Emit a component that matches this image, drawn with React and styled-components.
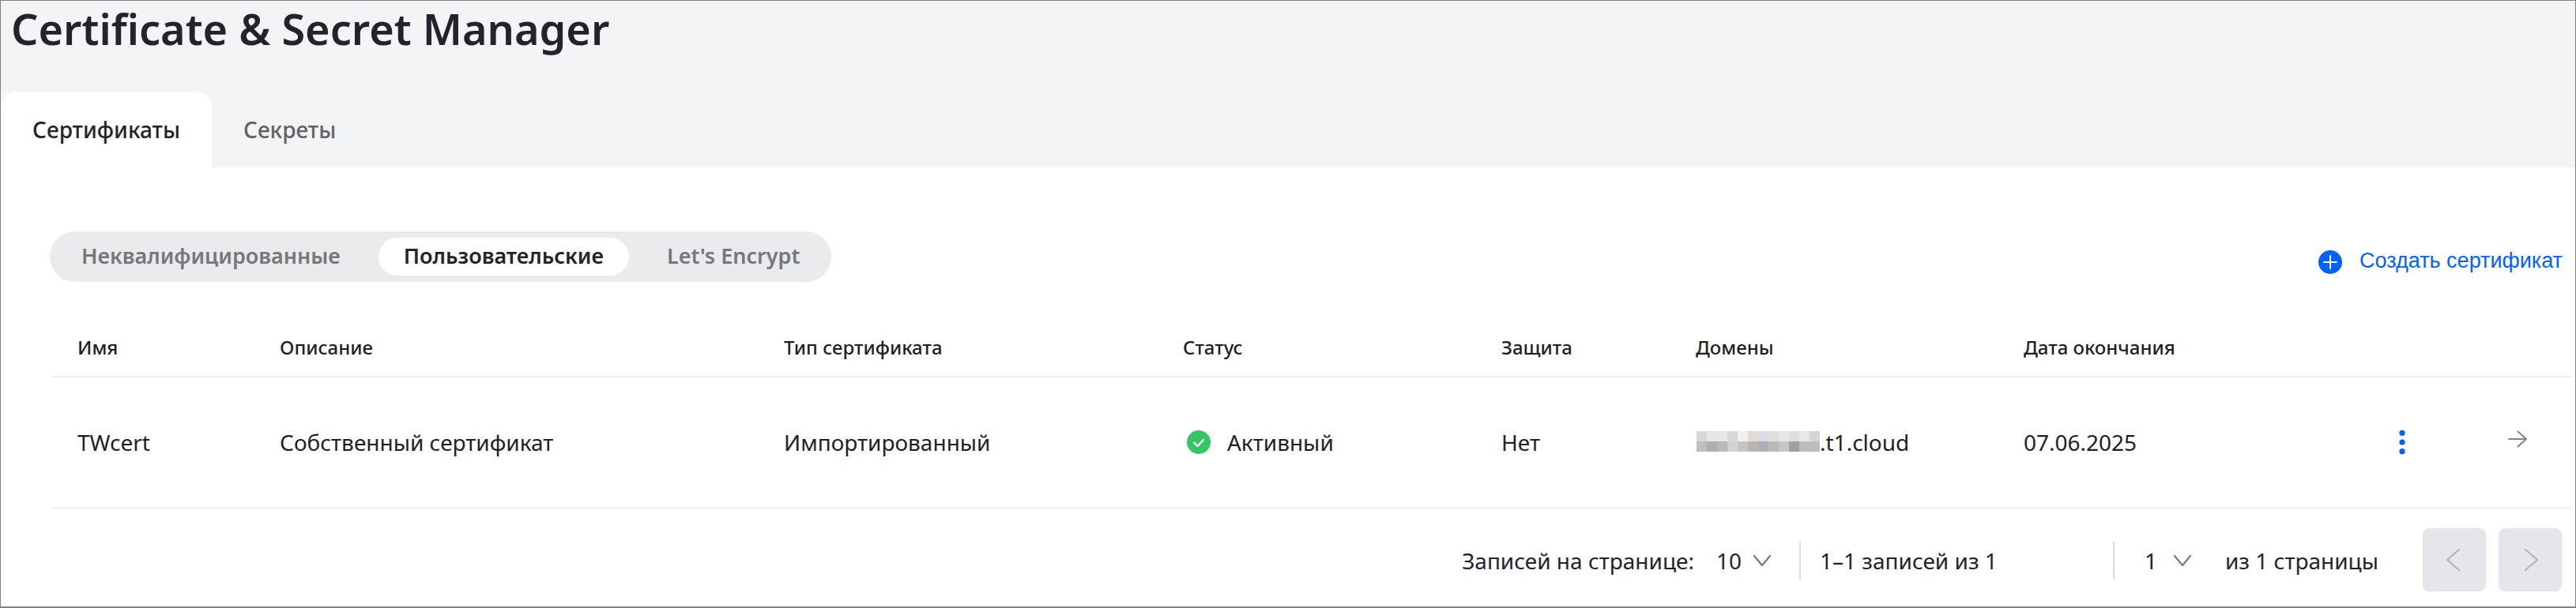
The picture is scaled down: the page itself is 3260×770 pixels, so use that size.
import React from "react";
import styled, { createGlobalStyle } from "styled-components";

const GlobalStyle = createGlobalStyle`
  *, *::before, *::after { box-sizing: border-box; }
  body { margin: 0; background: #fff; }
  button, select { font: inherit; color: inherit; border: 0; padding: 0; background: none; }
`;

const Page = styled.div`
  min-height: 100vh;
  border: 1px solid #808085;
  border-bottom-width: 2px;
  background: #fff;
  color: #23242b;
  font: 400 28px/40px "Noto Sans", sans-serif;
`;

const Header = styled.header`
  background: #f3f4f6;
`;

const Title = styled.h1`
  margin: 0;
  padding: 0 13px;
  font-size: 54px;
  line-height: 70px;
  font-weight: 600;
`;

const Tabs = styled.nav`
  display: flex;
  margin-top: 45px;
`;

const Tab = styled.button`
  height: 96px;
  padding: 0 40px;
  border-radius: 20px 20px 0 0;
  font-size: 28px;
  font-weight: 500;
  color: ${(p) => (p.$active ? "#23242b" : "#606265")};
  background: ${(p) => (p.$active ? "#fff" : "transparent")};
`;

const Main = styled.main`
  padding: 81px 4px 18px 62px;
`;

const Toolbar = styled.div`
  display: flex;
  justify-content: space-between;
  align-items: center;
  padding-right: 12px;
`;

const Segments = styled.div`
  display: flex;
  gap: 16px;
  padding: 8px;
  border-radius: 32px;
  background: #e9ebed;
`;

const Segment = styled.button`
  height: 48px;
  padding: 0 32px;
  border-radius: 24px;
  line-height: 38px;
  padding-bottom: 2px;
  font-weight: 600;
  font-size: 27px;
  color: ${(p) => (p.$active ? "#23242b" : "#75777d")};
  background: ${(p) => (p.$active ? "#fff" : "transparent")};
`;

const CreateLink = styled.a`
  display: flex;
  align-items: center;
  gap: 22px;
  padding-top: 14px;
  color: #0062ff;
  font: 400 27px/40px "Liberation Sans", Arial, sans-serif;
  text-decoration: none;
`;

const CreateLabel = styled.span`
  padding-bottom: 4px;
`;

const Table = styled.table`
  width: calc(100% - 2px);
  margin: 48px 0 0 2px;
  table-layout: fixed;
  border-collapse: separate;
  border-spacing: 0;
  color: #1f1f22;
`;

const HeadCell = styled.th`
  width: ${(p) => (p.$width ? p.$width + "px" : "auto")};
  height: 73px;
  padding: 0 0 2px 33px;
  text-align: left;
  font-size: 24px;
  font-weight: 500;
  white-space: nowrap;
  border-bottom: 2px solid #efeff0;
`;

const Cell = styled.td`
  height: 166px;
  padding: 0 0 0 33px;
  white-space: nowrap;
  border-bottom: 2px solid #efeff0;
`;

const Inline = styled.div`
  display: flex;
  align-items: center;
  gap: ${(p) => p.$gap || 0}px;
  padding-left: ${(p) => p.$indent || 0}px;
`;

const Mosaic = styled.span`
  display: grid;
  grid-template-columns: repeat(12, 13px);
  grid-auto-rows: 13px;
  margin: 0 0 2px 1px;
`;

const Pixel = styled.i`
  background: ${(p) => p.$color};
`;

const IconButton = styled.button`
  display: flex;
  align-items: center;
  justify-content: center;
  width: 40px;
  height: 40px;
  cursor: pointer;
`;

const OpenButton = styled(IconButton)`
  padding-bottom: 8px;
`;

const Footer = styled.footer`
  display: flex;
  align-items: center;
  justify-content: flex-end;
  padding: 25px 13px 0 0;
`;

const PageInfo = styled.div`
  display: flex;
  align-items: center;
  padding-top: 2px;
`;

const PageSize = styled.label`
  display: flex;
  align-items: center;
  gap: 28px;
`;

const Picker = styled.span`
  display: inline-grid;
  align-items: center;
  & > * { grid-area: 1 / 1; }
  & > svg { justify-self: end; pointer-events: none; }
`;

const Select = styled.select`
  appearance: none;
  width: ${(p) => p.$width}px;
  height: 48px;
`;

const Divider = styled.span`
  width: 2px;
  height: 48px;
  margin: 0 ${(p) => p.$after}px 0 ${(p) => p.$before}px;
  background: #dbdce1;
`;

const Range = styled.span`
  width: 371px;
`;

const PageTotal = styled.span`
  margin: 0 56px 0 42px;
`;

const PageButton = styled.button`
  display: flex;
  align-items: center;
  justify-content: center;
  width: 80px;
  height: 80px;
  border-radius: 8px;
  background: #e5e6ea;
  color: #afb2bb;
  & + & { margin-left: 16px; }
`;

const PlusIcon = () => (
  <svg width="30" height="30" viewBox="0 0 30 30" fill="none" aria-hidden="true">
    <circle cx="15" cy="15" r="15" fill="#0062ff" />
    <path d="M15 7v16M7 15h16" stroke="#fff" strokeWidth="2" strokeLinecap="round" />
  </svg>
);

const CheckIcon = () => (
  <svg width="30" height="30" viewBox="0 0 30 30" fill="none" aria-hidden="true">
    <circle cx="15" cy="15" r="15" fill="#34c565" />
    <path d="M9 15.5l4.5 4.5 7.5-8" stroke="#fff" strokeWidth="2.4" strokeLinecap="round" strokeLinejoin="round" />
  </svg>
);

const DotsIcon = () => (
  <svg width="8" height="32" viewBox="0 0 8 32" fill="#0062ff" aria-hidden="true">
    <circle cx="4" cy="4.3" r="3.6" />
    <circle cx="4" cy="16" r="3.6" />
    <circle cx="4" cy="27.7" r="3.6" />
  </svg>
);

const ArrowIcon = () => (
  <svg width="24" height="22" viewBox="0 0 24 22" fill="none" stroke="#7f8390" strokeWidth="2" strokeLinecap="round" strokeLinejoin="round" aria-hidden="true">
    <path d="M1 11h22M12.5 1.5L23 11l-10.500 9.500" />
  </svg>
);

const DownIcon = () => (
  <svg width="24" height="14" viewBox="0 0 24 14" fill="none" stroke="#727580" strokeWidth="2" strokeLinecap="round" strokeLinejoin="round" aria-hidden="true">
    <path d="M2 1l10 12L22 1" />
  </svg>
);

const SideIcon = ({ d }) => (
  <svg width="22" height="28" viewBox="0 0 22 28" fill="none" stroke="currentColor" strokeWidth="2" strokeLinecap="round" strokeLinejoin="round" aria-hidden="true">
    <path d={d} />
  </svg>
);

const columns = [
  ["Имя", 256],
  ["Описание", 0],
  ["Тип сертификата", 505],
  ["Статус", 403],
  ["Защита", 246],
  ["Домены", 415],
  ["Дата окончания", 459],
  ["", 146],
  ["", 122],
];

const mosaic = [
  "#d8d8d8", "#e4e7e6", "#e7e7e7", "#d9d9d9", "#f0f0ee", "#dedad4", "#d8dde2", "#dedede", "#e8e7e5", "#dfdedc", "#e8e8e8", "#d4d5d7",
  "#c2bdb9", "#abb0b7", "#b9b9b9", "#d3d3d2", "#c4c4c4", "#bbb5ad", "#abb0b9", "#b9b9b9", "#c7c6c5", "#a0a0a0", "#bcbcbc", "#bcbdbf",
];

export default function App() {
  return (
    <Page>
      <GlobalStyle />
      <Header>
        <Title>Certificate &amp; Secret Manager</Title>
        <Tabs>
          <Tab $active>Сертификаты</Tab>
          <Tab>Секреты</Tab>
        </Tabs>
      </Header>
      <Main>
        <Toolbar>
          <Segments>
            <Segment>Неквалифицированные</Segment>
            <Segment $active>Пользовательские</Segment>
            <Segment>Let's Encrypt</Segment>
          </Segments>
          <CreateLink href="#create">
            <PlusIcon />
            <CreateLabel>Создать сертификат</CreateLabel>
          </CreateLink>
        </Toolbar>
        <Table>
          <thead>
            <tr>
              {columns.map(([name, width], i) => (
                <HeadCell key={i} $width={width}>{name}</HeadCell>
              ))}
            </tr>
          </thead>
          <tbody>
            <tr>
              <Cell>TWcert</Cell>
              <Cell>Собственный сертификат</Cell>
              <Cell>Импортированный</Cell>
              <Cell>
                <Inline $gap={21} $indent={5}>
                  <CheckIcon />
                  Активный
                </Inline>
              </Cell>
              <Cell>Нет</Cell>
              <Cell>
                <Inline>
                  <Mosaic>
                    {mosaic.map((color, i) => <Pixel key={i} $color={color} />)}
                  </Mosaic>
                  .t1.cloud
                </Inline>
              </Cell>
              <Cell>07.06.2025</Cell>
              <Cell>
                <IconButton aria-label="Действия"><DotsIcon /></IconButton>
              </Cell>
              <Cell>
                <OpenButton aria-label="Открыть"><ArrowIcon /></OpenButton>
              </Cell>
            </tr>
          </tbody>
        </Table>
        <Footer>
          <PageInfo>
            <PageSize>
              Записей на странице:
              <Picker>
                <Select $width={70} defaultValue="10">
                  <option>10</option>
                </Select>
                <DownIcon />
              </Picker>
            </PageSize>
            <Divider $before={35} $after={24} />
            <Range>1–1 записей из 1</Range>
            <Divider $before={0} $after={38} />
            <Picker>
              <Select $width={60} defaultValue="1" aria-label="Страница">
                <option>1</option>
              </Select>
              <DownIcon />
            </Picker>
            <PageTotal>из 1 страницы</PageTotal>
          </PageInfo>
          <PageButton aria-label="Назад" disabled><SideIcon d="M17 1L2 14l15 13" /></PageButton>
          <PageButton aria-label="Вперёд" disabled><SideIcon d="M5 1l15 13L5 27" /></PageButton>
        </Footer>
      </Main>
    </Page>
  );
}
